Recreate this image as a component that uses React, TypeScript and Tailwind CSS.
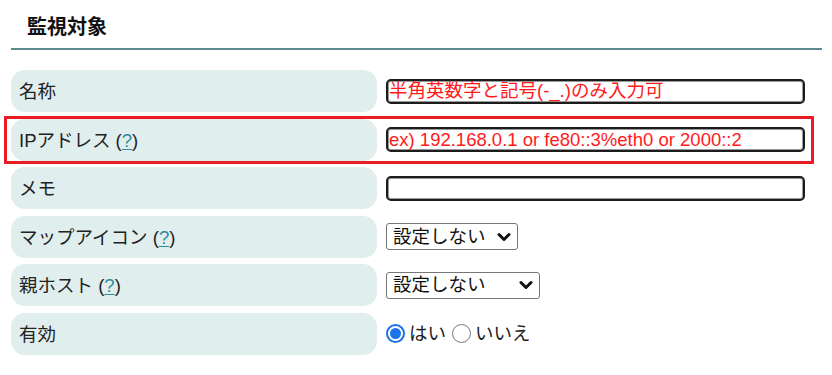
const font = "font-['Liberation_Sans','Noto_Sans_CJK_JP',sans-serif]";

function Help() {
  return (
    <>
      {'\u00a0('}
      <span className="text-[#2f8c9c] underline underline-offset-2">?</span>
      {')'}
    </>
  );
}

function Row({ label, help, children, marked }: { label: string; help?: boolean; children: React.ReactNode; marked?: boolean }) {
  return (
    <div className="relative flex items-center gap-[9px]">
      <div className="flex h-[42px] w-[366px] items-center rounded-[14px] bg-[#e1eeee] pl-[8px] pt-[2px] text-[18.5px] text-[#222]">
        <span>
          {label}
          {help && <Help />}
        </span>
      </div>
      {children}
      {marked && <div className="absolute -left-[7px] -top-[3px] h-[48px] w-[810px] border-[3px] border-[#ec1c24]" />}
    </div>
  );
}

function TextInput({ placeholder }: { placeholder?: string }) {
  return (
    <input
      readOnly
      placeholder={placeholder}
      className="h-[25px] w-[419px] rounded-[5px] border-2 border-[#1c1c1c] bg-white pl-[1px] text-[18.5px] leading-[21px] outline-none placeholder:text-[#ff1a1a] shadow-[inset_0_0_0_1px_#9a9a9a]"
    />
  );
}

function Select({ width }: { width: string }) {
  return (
    <div className={`flex h-[27px] items-center justify-between rounded-[3px] border border-[#767676] bg-white pl-[6px] pr-[6px] text-[18.5px] text-[#111] ${width}`}>
      <span>設定しない</span>
      <svg width="14" height="10" viewBox="0 0 14 10">
        <path d="M2 2.5 L7 7.5 L12 2.5" fill="none" stroke="#111" strokeWidth="3" strokeLinecap="round" strokeLinejoin="round" />
      </svg>
    </div>
  );
}

export default function App() {
  return (
    <div className={`h-[375px] w-[832px] overflow-hidden bg-white ${font}`}>
      <h2 className="pl-[27px] pt-[13px] text-[20px] font-bold leading-[28px] text-[#111]">監視対象</h2>
      <div className="ml-[11px] mt-[7px] h-[2px] w-[811px] bg-[#5b8b8c]" />
      <div className="ml-[11px] mt-[20px] flex flex-col gap-[6.5px]">
        <Row label="名称">
          <TextInput placeholder="半角英数字と記号(-_.)のみ入力可" />
        </Row>
        <Row label="IPアドレス" help marked>
          <TextInput placeholder="ex) 192.168.0.1 or fe80::3%eth0 or 2000::2" />
        </Row>
        <Row label="メモ">
          <TextInput />
        </Row>
        <Row label="マップアイコン" help>
          <Select width="w-[132px]" />
        </Row>
        <Row label="親ホスト" help>
          <Select width="w-[154px]" />
        </Row>
        <Row label="有効">
          <div className="flex items-center text-[18.5px] text-[#222]">
            <span className="flex h-[19px] w-[19px] items-center justify-center rounded-full border-2 border-[#1a73e8] bg-white">
              <span className="h-[11px] w-[11px] rounded-full bg-[#1a73e8]" />
            </span>
            <span className="ml-[4px]">はい</span>
            <span className="ml-[6px] h-[19px] w-[19px] rounded-full border border-[#777] bg-white" />
            <span className="ml-[4px]">いいえ</span>
          </div>
        </Row>
      </div>
    </div>
  );
}
